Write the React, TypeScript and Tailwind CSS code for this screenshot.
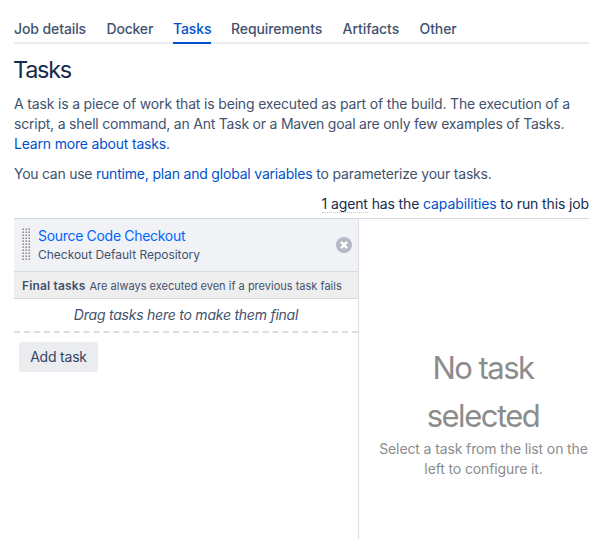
import React from "react";

const tabs = [
  { label: "Job details", width: "w-[72.5px]", spacing: "tracking-[-0.1px]" },
  { label: "Docker", width: "w-[46.5px]", spacing: "tracking-[-0.2px]" },
  { label: "Tasks", width: "w-[38px]", spacing: "tracking-[-0.1px]", active: true },
  { label: "Requirements", width: "w-[91.5px]", spacing: "tracking-[-0.1px]" },
  { label: "Artifacts", width: "w-[57px]", spacing: "tracking-[-0.05px]" },
  { label: "Other", width: "w-[38px]", spacing: "tracking-[-0.1px]" },
];

function Tabs() {
  return (
    <nav className="flex h-[26px] gap-5 border-b-2 border-[#ebecf0] font-medium text-[#42526e]">
      {tabs.map((tab) => (
        <a
          key={tab.label}
          className={`${tab.width} ${tab.spacing} h-[26px] shrink-0 whitespace-nowrap pt-px ${
            tab.active ? "border-b-2 border-[#0052cc] text-[#0052cc]" : ""
          }`}
        >
          {tab.label}
        </a>
      ))}
    </nav>
  );
}

function DragHandle() {
  return (
    <svg width="9" height="33" className="mt-[9px] shrink-0" aria-hidden="true">
      <defs>
        <pattern id="grip" width="3" height="3" patternUnits="userSpaceOnUse">
          <rect width="2" height="2" fill="#d2d3d4" />
          <rect x="1" y="0" width="1" height="1" fill="#b4b4b4" />
          <rect x="0" y="1" width="1" height="1" fill="#b4b4b4" />
          <rect x="1" y="1" width="1" height="1" fill="#969696" />
        </pattern>
      </defs>
      <rect width="9" height="33" fill="url(#grip)" />
    </svg>
  );
}

function RemoveIcon() {
  return (
    <svg width="16" height="16" viewBox="0 0 16 16" className="mt-[18px] shrink-0">
      <circle cx="8" cy="8" r="8" fill="#b3bac5" />
      <path d="M5.8 5.8l4.4 4.4M10.2 5.8l-4.4 4.4" stroke="#fff" strokeWidth="2.4" strokeLinecap="square" />
    </svg>
  );
}

function TaskList() {
  return (
    <section className="w-[345px] shrink-0 border-r border-[#dbdde2]">
      <div className="flex h-[53px] border-b border-[#d9dce2] bg-[#f1f2f6] pl-2">
        <DragHandle />
        <div className="ml-[7px] w-[298px] pt-[7px]">
          <div className="whitespace-nowrap tracking-[-0.31px] text-[#0065ff]">Source Code Checkout</div>
          <div className="whitespace-nowrap pt-px text-xs leading-4 tracking-[-0.02px] text-[#42526e]">
            Checkout Default Repository
          </div>
        </div>
        <RemoveIcon />
      </div>
      <div className="h-[27px] whitespace-nowrap border-b border-[#d5d7dc] bg-[#eeeeee] pl-2 pt-1 text-[11px] text-[#42526e]">
        <strong className="mr-1 text-xs font-semibold tracking-[0.15px]">Final tasks</strong>
        <span className="tracking-[0.01px]">Are always executed even if a previous task fails</span>
      </div>
      <div className="h-[34px] border-b-2 border-dashed border-[#dbdde2] pt-[6px] text-center italic tracking-[-0.23px] text-[#42526e]">
        Drag tasks here to make them final
      </div>
      <button className="ml-[5px] mt-[9px] h-[30px] w-[79px] rounded-[3px] bg-[#ebecf0] tracking-[-0.2px] text-[#344563]">
        Add task
      </button>
    </section>
  );
}

function EmptyState() {
  return (
    <section className="flex-1 pl-5 pt-[125px] text-center text-[#8c8c8c]">
      <h2 className="-ml-[2px] text-[31px] font-[440] leading-[48px] tracking-[-1.5px]">
        No task
        <br />
        selected
      </h2>
      <p className="-ml-px -mt-px whitespace-nowrap tracking-[-0.12px]">
        Select a task from the list on the
        <br />
        left to configure it.
      </p>
    </section>
  );
}

export default function App() {
  return (
    <main className="flex h-[539px] flex-col overflow-hidden bg-white pl-[14px] pr-[23px] pt-[18px] font-[Inter,sans-serif] text-sm leading-5 text-[#42526e]">
      <Tabs />
      <h1 className="-ml-px mt-[12px] text-[23.5px] leading-7 tracking-[-1.3px] text-[#172b4d]">Tasks</h1>
      <div className="mt-[10px] whitespace-nowrap">
        <p>
          <span className="tracking-[-0.17px]">
            A task is a piece of work that is being executed as part of the build. The execution of a
          </span>
          <br />
          <span className="tracking-[-0.22px]">
            script, a shell command, an Ant Task or a Maven goal are only few examples of Tasks.
          </span>
          <br />
          <a className="tracking-[-0.19px] text-[#0052cc]">Learn more about tasks</a>.
        </p>
        <p className="mt-[10px] tracking-[-0.19px]">
          <span className="tracking-[-0.26px]">You can use </span>
          <a className="text-[#0052cc]">runtime, plan and global variables</a> to parameterize your tasks.
        </p>
      </div>
      <p className="mt-[10px] whitespace-nowrap text-right tracking-[-0.12px] text-[#172b4d]">
        <span className="border-b border-dotted border-[#c1c7d0]">1 agent</span> has the{" "}
        <a className="text-[#0052cc]">capabilities</a> to run this job
      </p>
      <div className="mt-1 flex flex-1 border-t border-[#d5dae1]">
        <TaskList />
        <EmptyState />
      </div>
    </main>
  );
}
